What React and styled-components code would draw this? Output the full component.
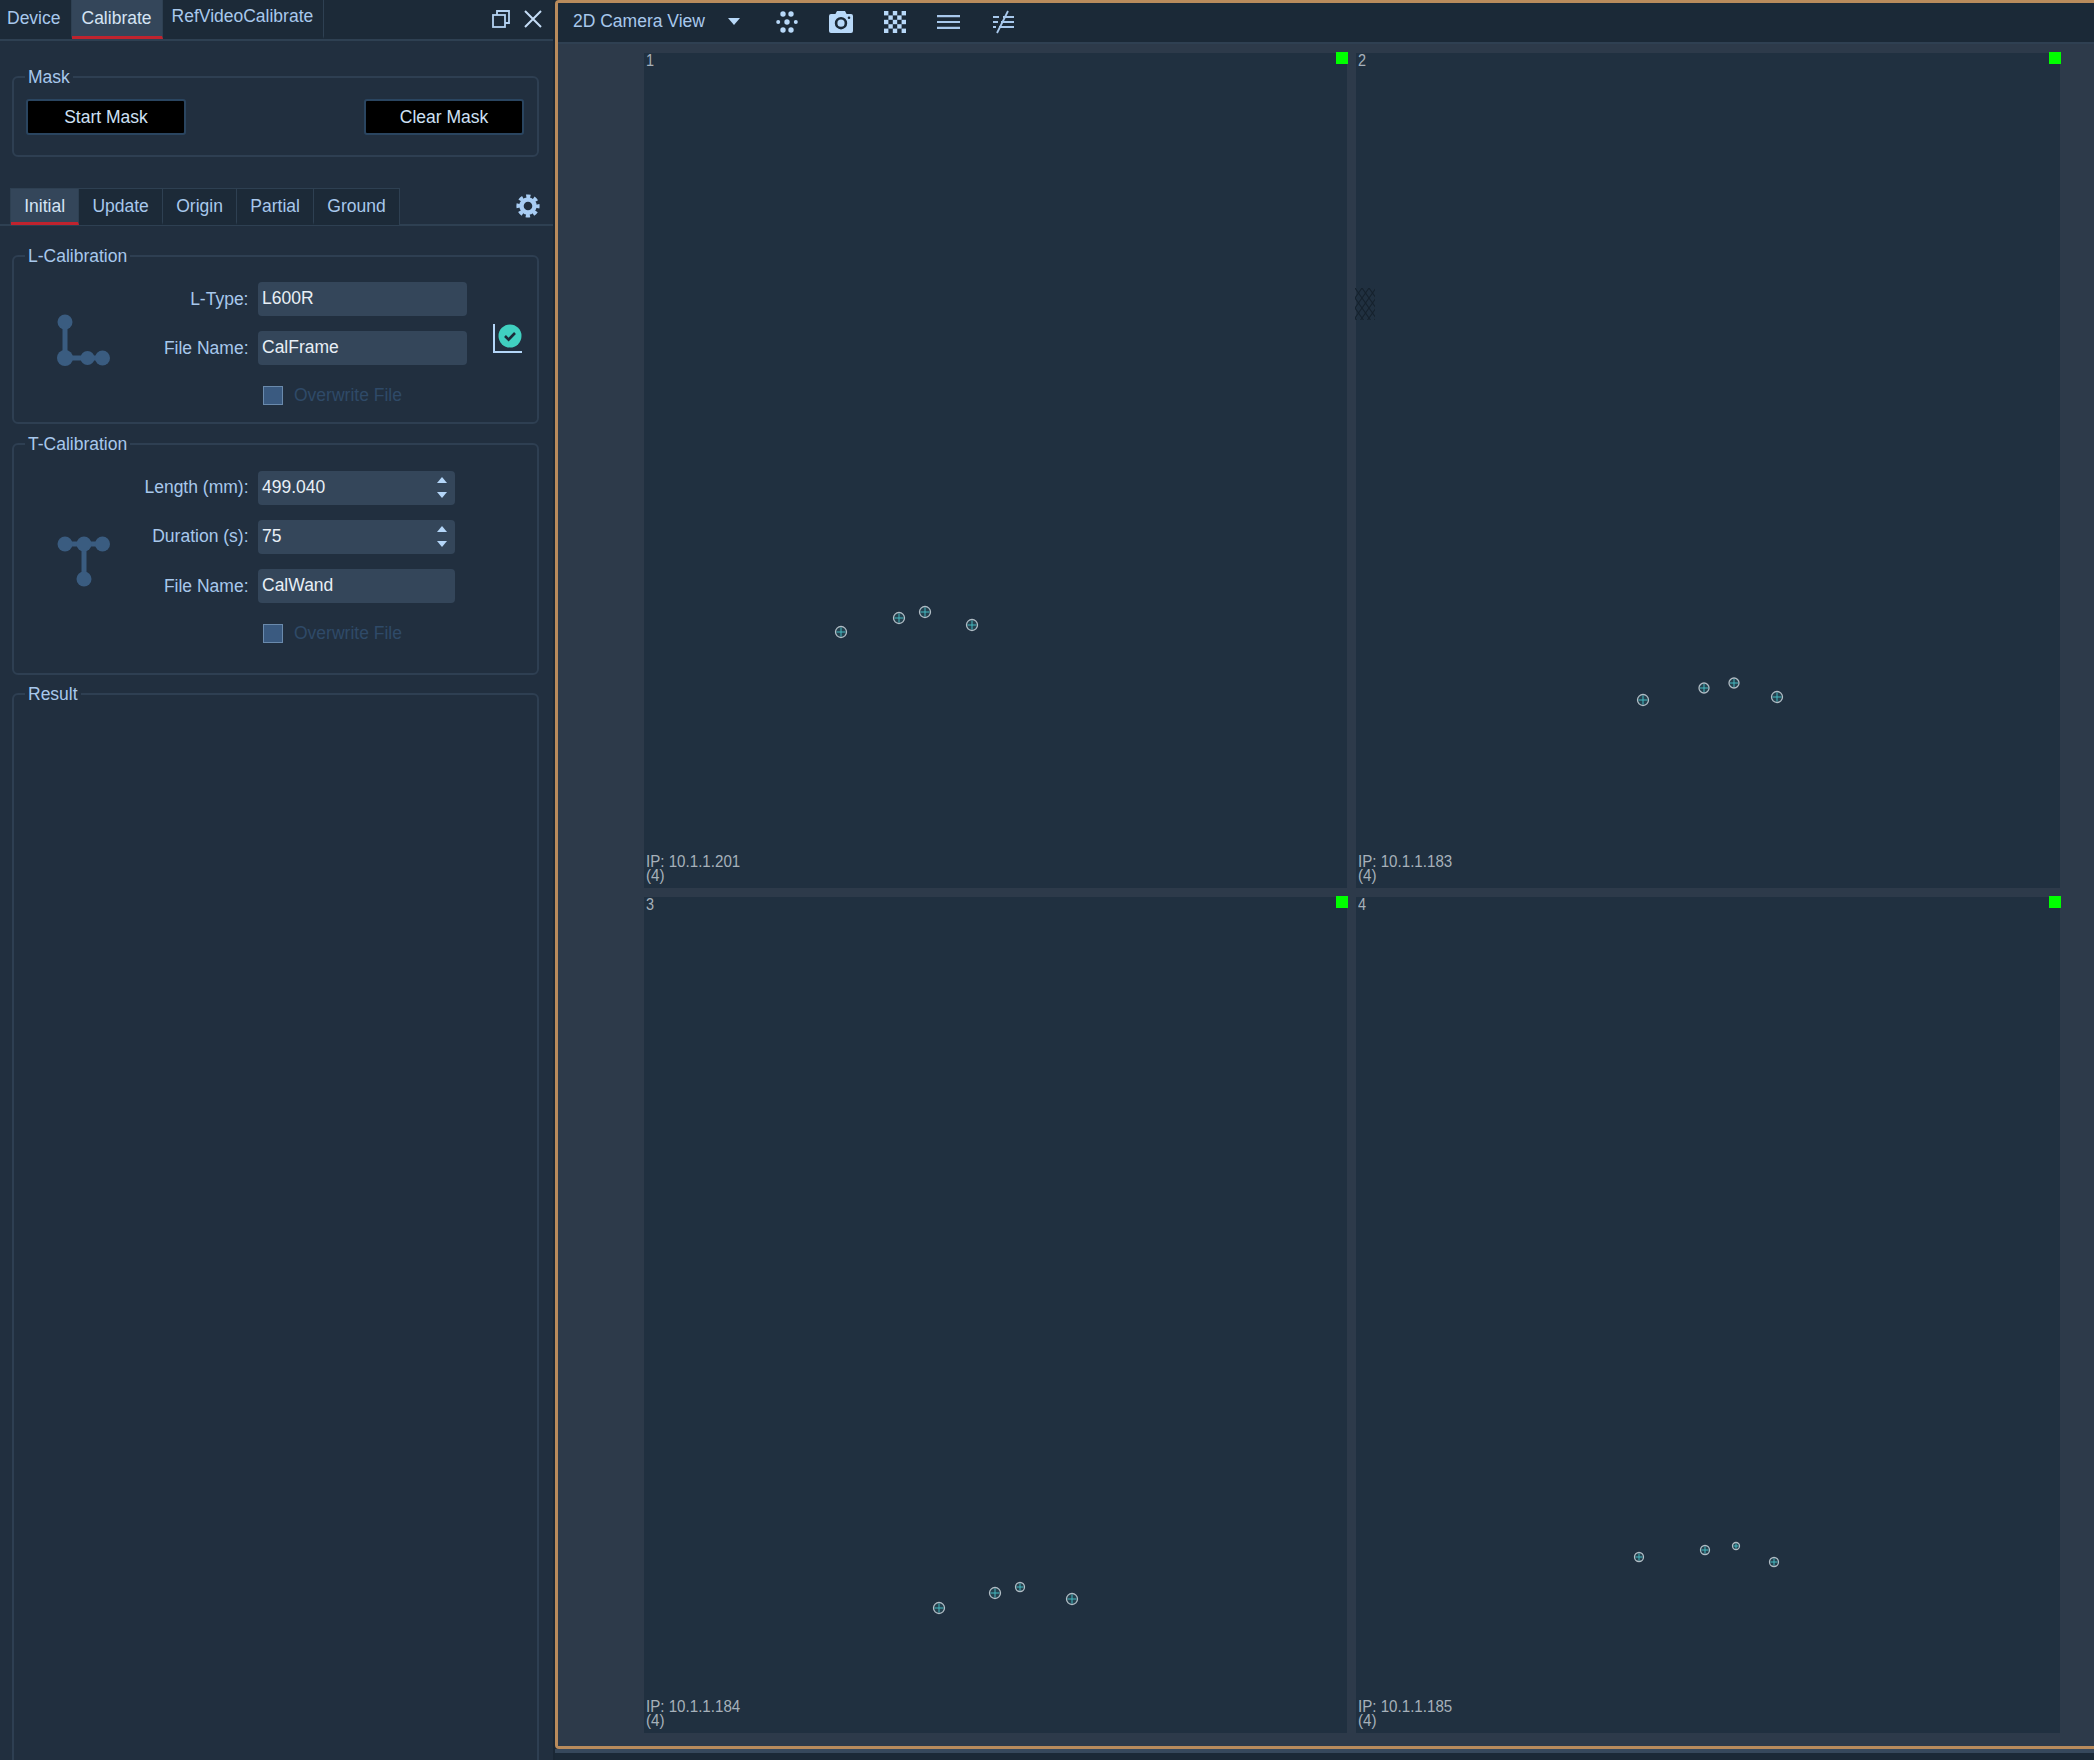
import styled, { createGlobalStyle } from "styled-components";

const GlobalStyle = createGlobalStyle`
  html, body {
    margin: 0;
    padding: 0;
    background: #1b2937;
    font-family: "Liberation Sans", Arial, sans-serif;
    font-size: 17.5px;
  }
  * { box-sizing: border-box; }
`;

const cameras = [
  {
    id: 1,
    ip: "10.1.1.201",
    points: [
      [197, 579, 5.5],
      [254.5, 565, 5.5],
      [280.5, 559, 5.5],
      [328, 572, 5.5],
    ],
  },
  {
    id: 2,
    ip: "10.1.1.183",
    hatch: true,
    points: [
      [287, 647, 5.5],
      [348, 635, 5],
      [377.5, 629.5, 5],
      [421, 644, 5.5],
    ],
  },
  {
    id: 3,
    ip: "10.1.1.184",
    points: [
      [295, 711, 5.5],
      [351, 696, 5.5],
      [376, 690, 4.5],
      [428, 701.5, 5.5],
    ],
  },
  {
    id: 4,
    ip: "10.1.1.185",
    points: [
      [283, 660, 4.5],
      [348.5, 653, 4.5],
      [380, 649, 3.5],
      [418, 665, 4.5],
    ],
  },
];

const RestoreIcon = () => (
  <svg width="18" height="18" viewBox="0 0 18 18" fill="none" stroke="#b4d2f2" strokeWidth="1.8">
    <rect x="1" y="5" width="12" height="12" />
    <path d="M5 5V1h12v12h-4" />
  </svg>
);

const CloseIcon = () => (
  <svg width="18" height="18" viewBox="0 0 18 18" fill="none" stroke="#c4dcf6" strokeWidth="2">
    <path d="M1 1l16 16M17 1L1 17" />
  </svg>
);

const GearIcon = () => (
  <svg width="24" height="24" viewBox="0 0 24 24" fill="none" stroke="#a8cdf4">
    <circle cx="12" cy="12" r="6.5" strokeWidth="4.4" />
    <circle cx="12" cy="12" r="9.8" strokeWidth="3.6" strokeDasharray="4.2 3.5" strokeDashoffset="2.1" />
  </svg>
);

const LFrameIcon = () => (
  <svg width="54" height="54" viewBox="0 0 54 54" fill="#3a5c80">
    <path d="M8 9v36h37" fill="none" stroke="#3a5c80" strokeWidth="5" />
    <circle cx="8" cy="9" r="7.5" />
    <circle cx="8" cy="45" r="8" />
    <circle cx="30.5" cy="45" r="7" />
    <circle cx="45.5" cy="45" r="7.5" />
  </svg>
);

const TWandIcon = () => (
  <svg width="54" height="54" viewBox="0 0 54 54" fill="#3a5c80">
    <path d="M8 9h37M27 9v35" fill="none" stroke="#3a5c80" strokeWidth="5" />
    <circle cx="8" cy="9" r="7.5" />
    <circle cx="27" cy="9" r="7.5" />
    <circle cx="45.5" cy="9" r="7.5" />
    <circle cx="27" cy="44" r="7.5" />
  </svg>
);

const ChartCheckIcon = () => (
  <svg width="30" height="31" viewBox="0 0 30 31">
    <path d="M1 1v28h28" fill="none" stroke="#b4d6f8" strokeWidth="2" />
    <circle cx="17" cy="13" r="11.5" fill="#40d0c0" />
    <path d="M12 13l3.6 3.6L22 10" fill="none" stroke="#1c2a38" strokeWidth="2.6" />
  </svg>
);

const MarkersIcon = () => (
  <svg width="22" height="22" viewBox="0 0 22 22" fill="#b8d8f8">
    <circle cx="7" cy="3" r="2.7" />
    <circle cx="15" cy="3" r="2.7" />
    <circle cx="2.2" cy="11" r="2" />
    <circle cx="11" cy="11" r="2.7" />
    <circle cx="19.8" cy="11" r="2" />
    <circle cx="7" cy="19" r="2.7" />
    <circle cx="15" cy="19" r="2.7" />
  </svg>
);

const CameraIcon = () => (
  <svg width="24" height="22" viewBox="0 0 24 22">
    <path
      fillRule="evenodd"
      fill="#b8d8f8"
      d="M8 0h8l1.6 3H22a2 2 0 0 1 2 2v15a2 2 0 0 1-2 2H2a2 2 0 0 1-2-2V5a2 2 0 0 1 2-2h4.4zM12 6a6.2 6.2 0 1 0 0 12.4A6.2 6.2 0 0 0 12 6zm0 2.6a3.6 3.6 0 1 1 0 7.2 3.6 3.6 0 0 1 0-7.2zM20 5.5a1.3 1.3 0 1 0 0 2.6 1.3 1.3 0 0 0 0-2.6z"
    />
  </svg>
);

const CheckerIcon = () => {
  const cells = [];
  for (let r = 0; r < 5; r++) {
    for (let c = 0; c < 5; c++) {
      if ((r + c) % 2 === 0) cells.push(<rect key={`${r}-${c}`} x={c * 4.4} y={r * 4.4} width="4.4" height="4.4" />);
    }
  }
  return (
    <svg width="22" height="22" viewBox="0 0 22 22" fill="#b8d8f8">
      {cells}
    </svg>
  );
};

const LinesIcon = () => (
  <svg width="23" height="14" viewBox="0 0 23 14" fill="none" stroke="#a8c8ec" strokeWidth="2.2">
    <path d="M0 1.2h23M0 7h23M0 12.8h23" />
  </svg>
);

const FilterLinesIcon = () => (
  <svg width="22" height="24" viewBox="0 0 22 24" fill="none" stroke="#a8c8ec" strokeWidth="2">
    <path d="M1 7h6M11 7h11M1 12h5M9 12h13M1 17h3M7 17h15" />
    <path d="M16 1L5 23" strokeWidth="1.8" />
  </svg>
);

const Marker = ({ x, y, r }) => (
  <MarkerSvg $x={x - 7} $y={y - 7} width="14" height="14" viewBox="0 0 14 14">
    <circle cx="7" cy="7" r={r} fill="#24414f" stroke="#b0bcc4" strokeWidth="1.3" />
    <path d={`M${7 - r + 1} 7h${2 * r - 2}M7 ${7 - r + 1}v${2 * r - 2}`} stroke="#45b8c0" strokeWidth="1" />
  </MarkerSvg>
);

const CameraCell = ({ camera }) => (
  <Cell>
    <CellIndex>{camera.id}</CellIndex>
    <StatusLed />
    {camera.hatch && (
      <Hatch width="20" height="32" viewBox="0 0 20 32">
        <defs>
          <pattern id="hatch" width="7" height="10" patternUnits="userSpaceOnUse">
            <path d="M0 0l7 10M7 0L0 10" stroke="#15212d" strokeWidth="1.2" />
          </pattern>
        </defs>
        <rect width="20" height="32" fill="url(#hatch)" />
      </Hatch>
    )}
    {camera.points.map(([x, y, r]) => (
      <Marker key={`${x}-${y}`} x={x} y={y} r={r} />
    ))}
    <CellInfo>
      <div>IP: {camera.ip}</div>
      <div>(4)</div>
    </CellInfo>
  </Cell>
);

const App = () => {
  return (
    <Page>
      <GlobalStyle />
      <SidePanel>
        <TopTabs>
          <TopTab $left="7px">Device</TopTab>
          <TopTab $active>Calibrate</TopTab>
          <TopTab $raised>RefVideoCalibrate</TopTab>
          <WindowButtons>
            <RestoreIcon />
            <CloseIcon />
          </WindowButtons>
        </TopTabs>

        <MaskGroup>
          <Legend>Mask</Legend>
          <BlackButton>Start Mask</BlackButton>
          <BlackButton>Clear Mask</BlackButton>
        </MaskGroup>

        <SubTabRow>
          <SubTabs>
            <SubTab $active>Initial</SubTab>
            <SubTab>Update</SubTab>
            <SubTab>Origin</SubTab>
            <SubTab>Partial</SubTab>
            <SubTab>Ground</SubTab>
          </SubTabs>
          <GearIcon />
        </SubTabRow>

        <LGroup>
          <Legend>L-Calibration</Legend>
          <IconSlot $top="31px">
            <LFrameIcon />
          </IconSlot>
          <Form $inputWidth="209px">
            <Label>L-Type:</Label>
            <Field>L600R</Field>
            <Label>File Name:</Label>
            <Field>CalFrame</Field>
            <CheckRow>
              <CheckBox />
              Overwrite File
            </CheckRow>
          </Form>
          <ChartSlot>
            <ChartCheckIcon />
          </ChartSlot>
        </LGroup>

        <TGroup>
          <Legend>T-Calibration</Legend>
          <IconSlot $top="64px">
            <TWandIcon />
          </IconSlot>
          <Form $inputWidth="197px">
            <Label>Length (mm):</Label>
            <Field>
              499.040
              <Spinner>
                <SpinUp />
                <SpinDown />
              </Spinner>
            </Field>
            <Label>Duration (s):</Label>
            <Field>
              75
              <Spinner>
                <SpinUp />
                <SpinDown />
              </Spinner>
            </Field>
            <Label>File Name:</Label>
            <Field>CalWand</Field>
            <CheckRow>
              <CheckBox />
              Overwrite File
            </CheckRow>
          </Form>
        </TGroup>

        <ResultGroup>
          <Legend>Result</Legend>
        </ResultGroup>
      </SidePanel>

      <RightColumn>
        <ViewPanel>
          <Toolbar>
            <ViewSelect>
              2D Camera View
              <Caret />
            </ViewSelect>
            <ToolIcons>
              <ToolSlot><MarkersIcon /></ToolSlot>
              <ToolSlot><CameraIcon /></ToolSlot>
              <ToolSlot><CheckerIcon /></ToolSlot>
              <ToolSlot><LinesIcon /></ToolSlot>
              <ToolSlot><FilterLinesIcon /></ToolSlot>
            </ToolIcons>
          </Toolbar>
          <Canvas>
            {cameras.map((camera) => (
              <CameraCell key={camera.id} camera={camera} />
            ))}
          </Canvas>
        </ViewPanel>
        <BottomStrip />
      </RightColumn>
    </Page>
  );
};

export default App;

const Page = styled.div`
  display: flex;
  width: 2094px;
  height: 1760px;
  overflow: hidden;
  background: #1b2937;
`;

const SidePanel = styled.div`
  flex: 0 0 555px;
  height: 1760px;
  overflow: hidden;
  background: #212f3f;
  border-right: 2px solid #1a2735;
  color: #a8c8ec;
`;

const TopTabs = styled.div`
  display: flex;
  height: 41px;
  background: #1c2a38;
  border-bottom: 2px solid #2e4052;
`;

const TopTab = styled.div`
  display: flex;
  align-items: center;
  height: 39px;
  padding: 0 10px ${(p) => (p.$raised ? "3px" : "0")} ${(p) => p.$left || (p.$raised ? "9px" : "10px")};
  background: ${(p) => (p.$active ? "#34465a" : "transparent")};
  border-right: 1.5px solid #2e4052;
  border-bottom: 3px solid ${(p) => (p.$active ? "#c0232e" : "transparent")};
  color: ${(p) => (p.$active ? "#d5e4f4" : "#a8c8ec")};
`;

const WindowButtons = styled.div`
  display: flex;
  align-items: center;
  gap: 14px;
  margin-left: auto;
  padding: 0 11px 2px 0;
`;

const Group = styled.div`
  position: relative;
  width: 527px;
  margin-left: 12px;
  border: 2px solid #2e3f52;
  border-radius: 6px;
`;

const Legend = styled.span`
  position: absolute;
  top: -13px;
  left: 11px;
  padding: 0 3px;
  background: #212f3f;
  line-height: 24px;
  color: #a8c8ec;
`;

const MaskGroup = styled(Group)`
  display: flex;
  justify-content: space-between;
  height: 81px;
  margin-top: 35px;
  padding: 21px 13px 0 12px;
`;

const BlackButton = styled.button`
  width: 160px;
  height: 36px;
  background: #000;
  border: 2px solid #2a4560;
  border-radius: 3px;
  color: #cfe0f4;
  font: inherit;
`;

const SubTabRow = styled.div`
  display: flex;
  justify-content: space-between;
  align-items: center;
  height: 38px;
  margin-top: 31px;
  padding: 0 13px 0 10px;
  border-bottom: 2px solid #2e4052;
`;

const SubTabs = styled.div`
  display: flex;
  height: 37px;
  border: 1.5px solid #2e4052;
  border-bottom: none;
  background: #1c2a38;
`;

const SubTab = styled.div`
  display: flex;
  align-items: center;
  padding: 2px 13.2px 0;
  background: ${(p) => (p.$active ? "#34465a" : "transparent")};
  border-right: 1.5px solid #2e4052;
  border-bottom: 3px solid ${(p) => (p.$active ? "#c0232e" : "transparent")};
  color: ${(p) => (p.$active ? "#d5e4f4" : "#a8c8ec")};
  &:last-child {
    border-right: none;
  }
`;

const LGroup = styled(Group)`
  display: flex;
  height: 169px;
  margin-top: 29px;
  padding-top: 25px;
`;

const TGroup = styled(Group)`
  display: flex;
  height: 232px;
  margin-top: 18.5px;
  padding-top: 26px;
`;

const ResultGroup = styled(Group)`
  height: 1200px;
  margin-top: 18.5px;
`;

const IconSlot = styled.div`
  flex: 0 0 54px;
  height: 54px;
  margin: ${(p) => p.$top} 0 0 43px;
`;

const Form = styled.div`
  display: grid;
  grid-template-columns: 137.5px ${(p) => p.$inputWidth};
  grid-auto-rows: 34px;
  column-gap: 9.5px;
  row-gap: 15.3px;
  align-self: flex-start;
`;

const Label = styled.div`
  display: flex;
  align-items: center;
  justify-content: flex-end;
  white-space: nowrap;
  color: #a8c8ec;
`;

const Field = styled.div`
  display: flex;
  align-items: center;
  justify-content: space-between;
  padding: 0 8px 1px 4px;
  background: #34465a;
  border-radius: 4px;
  color: #e8eff6;
`;

const Spinner = styled.div`
  display: flex;
  flex-direction: column;
  gap: 9px;
  margin-top: 1px;
`;

const SpinUp = styled.span`
  width: 0;
  height: 0;
  border-left: 5px solid transparent;
  border-right: 5px solid transparent;
  border-bottom: 6px solid #b4d6f8;
`;

const SpinDown = styled(SpinUp)`
  border-bottom: none;
  border-top: 6px solid #b4d6f8;
`;

const CheckRow = styled.div`
  grid-column: 2;
  display: flex;
  align-items: center;
  gap: 11.5px;
  height: 20px;
  margin: 5px 0 0 5px;
  color: #2f4a68;
`;

const CheckBox = styled.span`
  width: 19.5px;
  height: 19.5px;
  background: #3a5a80;
  border: 1.5px solid #6a8aac;
`;

const ChartSlot = styled.div`
  margin: 41px 0 0 26px;
`;

const RightColumn = styled.div`
  flex: 1;
  min-width: 0;
  height: 1760px;
`;

const ViewPanel = styled.div`
  display: flex;
  flex-direction: column;
  height: 1749px;
  border: 3px solid #b98b5c;
  border-right: none;
  border-radius: 4px 0 0 4px;
  overflow: hidden;
`;

const Toolbar = styled.div`
  display: flex;
  align-items: center;
  flex: 0 0 41px;
  padding: 0 0 2px 15px;
  background: #1b2937;
  border-bottom: 2px solid #2f4052;
`;

const ViewSelect = styled.div`
  display: flex;
  align-items: center;
  gap: 23px;
  color: #a8c8ec;
`;

const Caret = styled.span`
  width: 0;
  height: 0;
  border-left: 6.5px solid transparent;
  border-right: 6.5px solid transparent;
  border-top: 7px solid #b8d8f8;
`;

const ToolIcons = styled.div`
  display: flex;
  align-items: center;
  margin-left: 20px;
`;

const ToolSlot = styled.div`
  display: flex;
  align-items: center;
  justify-content: center;
  width: 54px;
  height: 24px;
`;

const Canvas = styled.div`
  flex: 1;
  display: grid;
  grid-template-columns: 703px 704px;
  grid-template-rows: 835px 836px;
  column-gap: 9px;
  row-gap: 9px;
  padding: 9px 0 13px 86px;
  background: #2d3a4a;
`;

const Cell = styled.div`
  position: relative;
  background: #203040;
`;

const CellIndex = styled.div`
  position: absolute;
  top: -1px;
  left: 2px;
  font-size: 17px;
  line-height: 16px;
  padding-top: 1px;
  color: #a6b0ba;
  transform: scaleX(0.85);
  transform-origin: left;
`;

const CellInfo = styled.div`
  position: absolute;
  left: 2px;
  bottom: 6px;
  font-size: 17px;
  line-height: 13.5px;
  color: #a6b0ba;
  white-space: nowrap;
  transform: scaleX(0.89);
  transform-origin: left;
`;

const StatusLed = styled.span`
  position: absolute;
  top: -1.5px;
  right: -1px;
  width: 12px;
  height: 12px;
  background: #00ff00;
`;

const Hatch = styled.svg`
  position: absolute;
  top: 235px;
  left: -1px;
`;

const MarkerSvg = styled.svg`
  position: absolute;
  left: ${(p) => p.$x}px;
  top: ${(p) => p.$y}px;
`;

const BottomStrip = styled.div`
  height: 4px;
  background: #36485c;
`;
